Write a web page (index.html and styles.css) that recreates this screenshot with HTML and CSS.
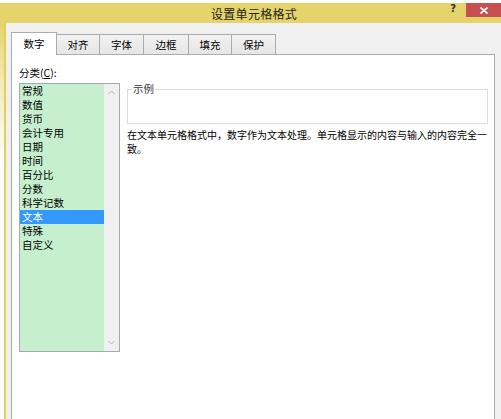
FILE: index.html
```html
<!DOCTYPE html>
<html lang="zh-CN">
<head>
<meta charset="utf-8">
<title>设置单元格格式</title>
<link rel="stylesheet" href="styles.css">
</head>
<body>
<div class="window">
  <div class="titlebar">
    <span class="title">设置单元格格式</span>
    <span class="help">?</span>
    <span class="close">
      <svg width="8" height="7" viewBox="0 0 8 7"><path d="M0.5 0.5L7.5 6.5M7.5 0.5L0.5 6.5" stroke="#fff" stroke-width="1.6"/></svg>
    </span>
  </div>
  <div class="frame">
    <div class="edge"></div>
    <div class="dialog">
      <div class="tabs">
        <div class="tab active w46">数字</div>
        <div class="tab w43">对齐</div>
        <div class="tab w44">字体</div>
        <div class="tab w45">边框</div>
        <div class="tab w43">填充</div>
        <div class="tab w44">保护</div>
      </div>
      <div class="panel">
        <div class="left">
          <div class="label">分类(<u>C</u>):</div>
          <div class="listbox">
            <ul class="items">
              <li>常规</li>
              <li>数值</li>
              <li>货币</li>
              <li>会计专用</li>
              <li>日期</li>
              <li>时间</li>
              <li>百分比</li>
              <li>分数</li>
              <li>科学记数</li>
              <li class="selected">文本</li>
              <li>特殊</li>
              <li>自定义</li>
            </ul>
            <div class="scrollbar">
              <svg width="7" height="5" viewBox="0 0 7 5"><path d="M0.5 4L3.5 1L6.5 4" fill="none" stroke="#b4b4b4" stroke-width="1"/></svg>
              <svg width="7" height="5" viewBox="0 0 7 5"><path d="M0.5 1L3.5 4L6.5 1" fill="none" stroke="#b4b4b4" stroke-width="1"/></svg>
            </div>
          </div>
        </div>
        <div class="right">
          <fieldset class="sample"><legend>示例</legend></fieldset>
          <p class="desc">在文本单元格格式中，数字作为文本处理。单元格显示的内容与输入的内容完全一致。</p>
        </div>
      </div>
    </div>
  </div>
</div>
</body>
</html>
```
FILE: styles.css
```css
html, body {
  margin: 0;
  padding: 0;
  background: #ffffff;
  overflow: hidden;
}
body {
  width: 501px;
  height: 419px;
  font-family: "Noto Sans CJK SC", "Microsoft YaHei", sans-serif;
  color: #000;
}
.window {
  padding-top: 3px;
}
.titlebar {
  height: 20px;
  background: #e5d46b;
  display: flex;
  align-items: flex-start;
}
.title {
  margin-left: 211px;
  margin-top: 4px;
  font-size: 12px;
  line-height: 14px;
  letter-spacing: 0.3px;
  color: #222;
}
.help {
  margin-left: auto;
  margin-right: 10px;
  margin-top: 0;
  font-family: "DejaVu Sans", sans-serif;
  font-weight: bold;
  font-size: 10px;
  line-height: 11px;
  color: #2a2a2a;
}
.close {
  width: 35px;
  height: 14px;
  background: #c75050;
  display: flex;
  align-items: center;
  justify-content: center;
}
.frame {
  display: flex;
  height: 396px;
}
.edge {
  flex: 0 0 auto;
  width: 4px;
  background: linear-gradient(to bottom, #e5d46b 0, #f3eab8 60px, #ffffff 140px);
  border-right: 2px solid #e2cf5e;
}
.dialog {
  flex: 1;
  min-width: 0;
  background: #f0f0f0;
  padding: 9px 6px 0 5px;
  display: flex;
  flex-direction: column;
}
.tabs {
  display: flex;
  align-items: flex-end;
  height: 22px;
}
.tab {
  box-sizing: border-box;
  height: 20px;
  border: 1px solid #acacac;
  border-left: none;
  border-bottom: none;
  background: linear-gradient(#f2f2f2, #e6e6e6);
  font-size: 10.5px;
  line-height: 19px;
  text-align: center;
}
.tab.active {
  height: 23px;
  margin-bottom: -1px;
  background: #ffffff;
  border-left: 1px solid #acacac;
  line-height: 22px;
  position: relative;
  z-index: 1;
}
.w43 { width: 43px; }
.w44 { width: 44px; }
.w45 { width: 45px; }
.w46 { width: 46px; }
.panel {
  flex: 1;
  min-width: 0;
  background: #ffffff;
  border: 1px solid #acacac;
  border-bottom: none;
  display: flex;
  padding: 11px 5px 0 7px;
}
.left {
  flex: 0 0 auto;
  display: flex;
  flex-direction: column;
}
.label {
  font-size: 10.5px;
  line-height: 14px;
  height: 14px;
  margin-bottom: 3px;
}
.label u {
  text-decoration-thickness: 1px;
  text-underline-offset: 1px;
}
.listbox {
  box-sizing: border-box;
  width: 101px;
  height: 269px;
  border: 1px solid #a5a9b0;
  display: flex;
}
.items {
  list-style: none;
  margin: 0;
  padding: 0;
  width: 84px;
  background: #c6efce;
}
.items li {
  height: 14px;
  line-height: 14px;
  font-size: 10.5px;
  padding-left: 2px;
  white-space: nowrap;
}
.items li.selected {
  background: #3399ff;
  color: #ffffff;
}
.scrollbar {
  flex: 1;
  background: #f0f0f0;
  display: flex;
  flex-direction: column;
  justify-content: space-between;
  align-items: center;
  padding: 6px 0 6px;
}
.right {
  flex: 1;
  min-width: 0;
  margin-left: 7px;
  display: flex;
  flex-direction: column;
}
.sample {
  box-sizing: border-box;
  width: 361px;
  height: 41px;
  margin: 17px 0 0 0;
  padding: 0;
  border: 1px solid #dcdcdc;
}
.sample legend {
  margin-left: 4px;
  padding: 0 1px;
  font-size: 10.5px;
  line-height: 12px;
  color: #333;
}
.desc {
  margin: 4px 0 0 0;
  width: 362px;
  font-size: 10px;
  line-height: 14px;
}
```
